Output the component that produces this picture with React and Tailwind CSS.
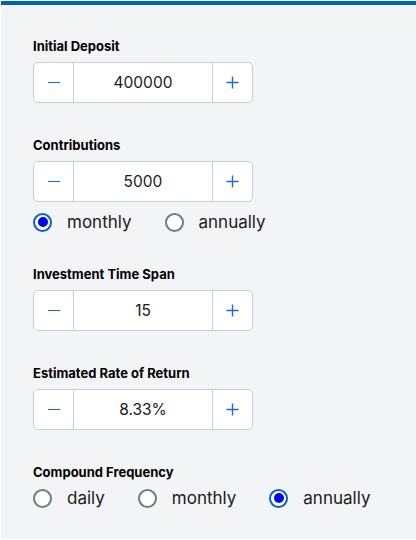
import { useState } from "react";

const font = { fontFamily: "Inter, 'Noto Sans', sans-serif" };

function Stepper({ value }) {
  return (
    <div className="flex h-[41px] w-[220px] rounded-[5px] border border-[#c6cdd4] bg-white">
      <button className="flex w-[40px] items-center justify-center border-r border-[#c6cdd4]">
        <span className="block h-px w-[12px] bg-[#1a6cc4]" />
      </button>
      <div className="flex flex-1 items-center justify-center text-[15.5px] text-[#1a1a1a]">
        {value}
      </div>
      <button className="flex w-[40px] items-center justify-center border-l border-[#c6cdd4]">
        <svg width="13" height="13" viewBox="0 0 13 13">
          <path d="M6.5 0.5v12M0.5 6.5h12" stroke="#1a6cc4" strokeWidth="1.4" />
        </svg>
      </button>
    </div>
  );
}

function Radio({ label, checked }) {
  return (
    <label className="flex items-center gap-[15px] text-[17px] leading-5 text-[#1a1a1a]">
      <span
        className={`flex h-[19px] w-[19px] items-center justify-center rounded-full border-2 bg-white ${
          checked ? "border-[#0b5fc8]" : "border-[#6e7c84]"
        }`}
      >
        {checked && <span className="block h-[10px] w-[10px] rounded-full bg-[#0000ee]" />}
      </span>
      {label}
    </label>
  );
}

function Field({ label, children }) {
  return (
    <div>
      <div className="mb-2 text-[13px] font-bold leading-4 text-black">{label}</div>
      {children}
    </div>
  );
}

export default function App() {
  const [contrib] = useState("monthly");
  const [compound] = useState("annually");

  return (
    <div className="bg-white py-px pl-px" style={font}>
      <div className="h-[538px] border-t-4 border-[#0061b8] bg-[#f3f4f6] px-8 pt-[33px]">
        <div className="flex flex-col gap-[34px]">
          <Field label="Initial Deposit">
            <Stepper value="400000" />
          </Field>

          <Field label="Contributions">
            <Stepper value="5000" />
            <div className="mt-[10px] flex gap-[33px]">
              <Radio label="monthly" checked={contrib === "monthly"} />
              <Radio label="annually" checked={contrib === "annually"} />
            </div>
          </Field>

          <Field label="Investment Time Span">
            <Stepper value="15" />
          </Field>

          <Field label="Estimated Rate of Return">
            <Stepper value="8.33%" />
          </Field>

          <Field label="Compound Frequency">
            <div className="flex gap-[33px]">
              <Radio label="daily" checked={compound === "daily"} />
              <Radio label="monthly" checked={compound === "monthly"} />
              <Radio label="annually" checked={compound === "annually"} />
            </div>
          </Field>
        </div>
      </div>
    </div>
  );
}
